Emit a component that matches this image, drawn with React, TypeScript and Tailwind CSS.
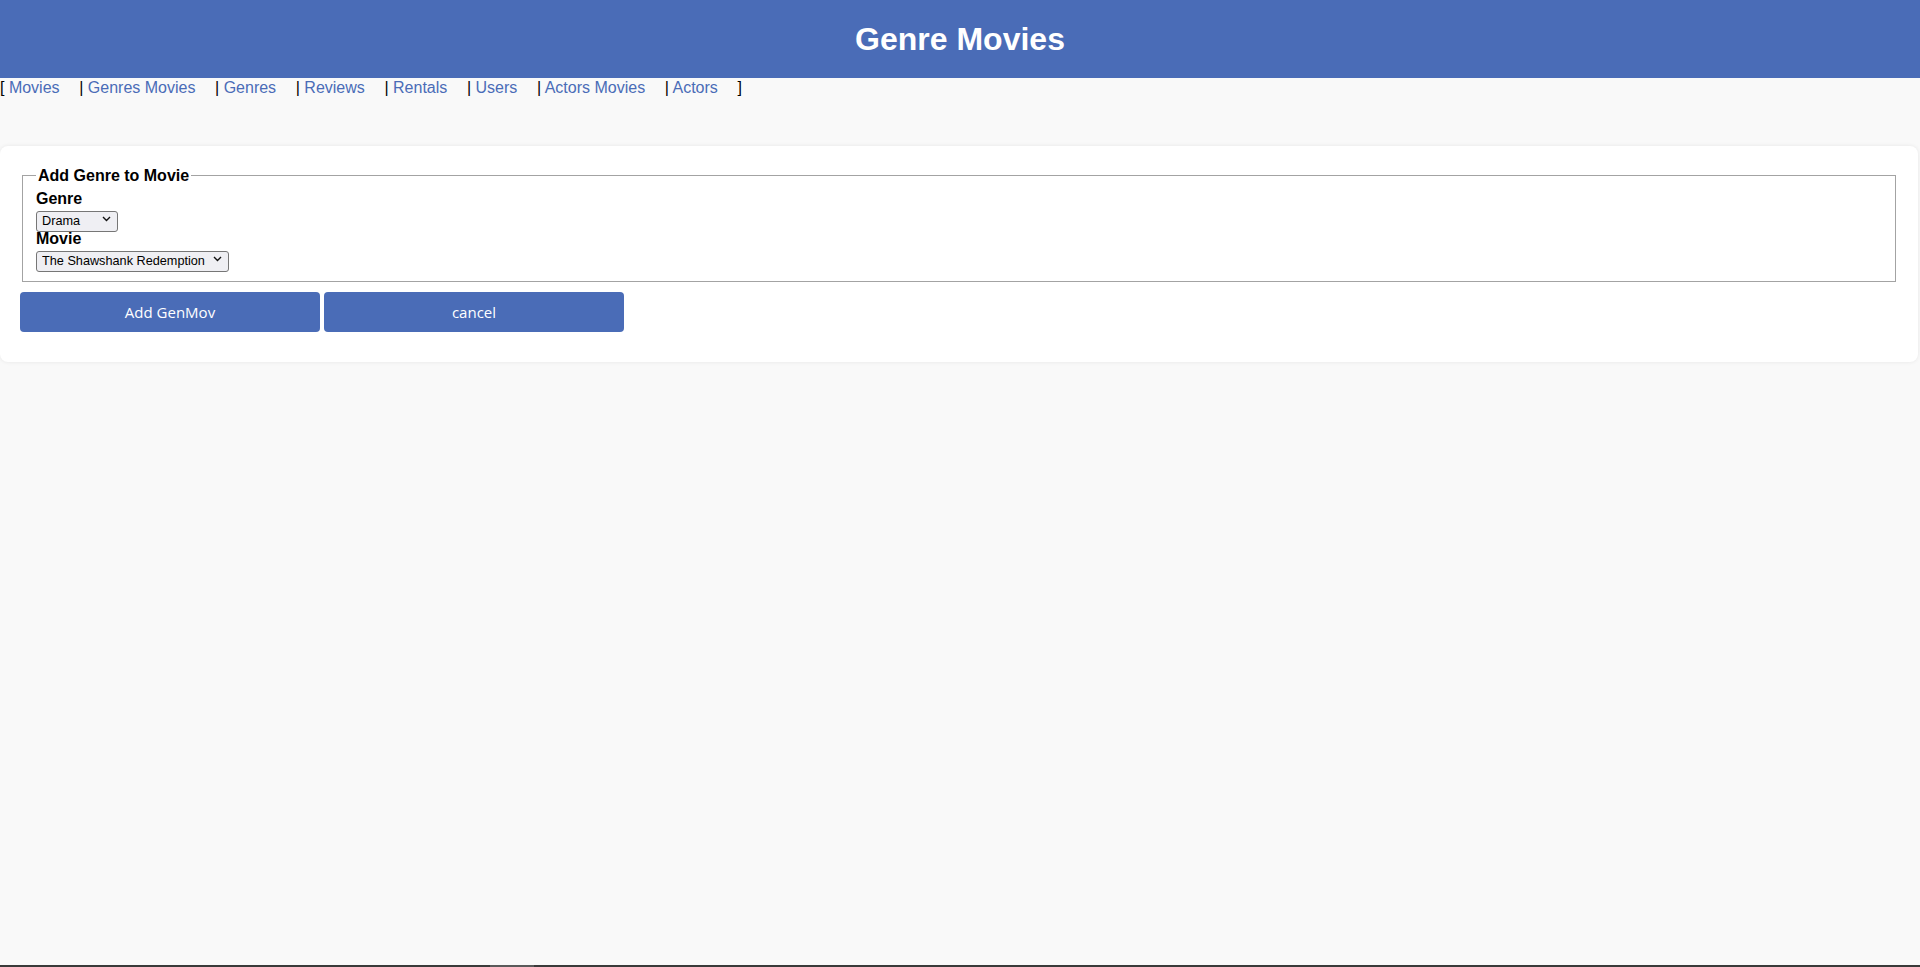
import React from 'react'

const links = ['Movies', 'Genres Movies', 'Genres', 'Reviews', 'Rentals', 'Users', 'Actors Movies', 'Actors']

function Select({ value, width }: { value: string; width: string }) {
  return (
    <div className={`relative h-[21px] ${width}`}>
      <select className="h-full w-full appearance-none rounded-[3px] border border-[#767676] bg-[#efeff3] pl-[5px] text-[12.7px] leading-[19px]">
        <option>{value}</option>
      </select>
      <svg
        className="pointer-events-none absolute right-[7px] top-[8px]"
        width="9"
        height="6"
        viewBox="0 0 9 6"
        fill="none"
      >
        <path d="M1 1l3.5 3.5L8 1" stroke="#111" strokeWidth="1.4" />
      </svg>
    </div>
  )
}

export default function App() {
  return (
    <div
      className="flex h-[967px] flex-col bg-[#f9f9f9] text-black"
      style={{ fontFamily: '"Liberation Sans", Arial, sans-serif' }}
    >
      <header className="flex h-[78px] shrink-0 items-center justify-center bg-[#4a6cb7]">
        <h1 className="text-[32px] font-bold leading-none text-white">Genre Movies</h1>
      </header>

      <nav className="whitespace-pre text-[16px] leading-[20px]">
        {'[ '}
        {links.map((l, i) => (
          <React.Fragment key={l}>
            {i > 0 && ' | '}
            <a href="#" className="mr-[15.2px] text-[#4a6cb7]">
              {l}
            </a>
          </React.Fragment>
        ))}
        {' ]'}
      </nav>

      <main className="mr-[2px] mt-[48px] rounded-lg bg-white p-5 shadow-[0_0_4px_rgba(0,0,0,0.08)]">
        <fieldset className="mx-[2px] border border-[#a3a3a3] px-[13px] pb-[12px] pt-[4px]">
          <legend className="px-0.5 text-[16px] font-bold leading-[19px]">Add Genre to Movie</legend>
          <div className="flex flex-col items-start">
            <label className="text-[16px] font-bold leading-[19px]">Genre</label>
            <Select value="Drama" width="w-[82px]" />
            <label className="text-[16px] font-bold leading-[19px]">Movie</label>
            <Select value="The Shawshank Redemption" width="w-[193px]" />
          </div>
        </fieldset>

        <div
          className="mb-[10px] mt-[10px] flex gap-[4px]"
          style={{ fontFamily: '"Open Sans", "Noto Sans", sans-serif' }}
        >
          <button className="h-[40px] w-[300px] rounded-[4px] bg-[#4a6cb7] text-[15px] text-white">
            Add GenMov
          </button>
          <button className="h-[40px] w-[300px] rounded-[4px] bg-[#4a6cb7] text-[15px] text-white">
            cancel
          </button>
        </div>
      </main>

      <div className="flex-1" />
      <div className="flex h-[2px] shrink-0 bg-[#3a3a3a]">
        <div className="ml-[490px] w-[44px] bg-[#5a5a5a]" />
      </div>
    </div>
  )
}
